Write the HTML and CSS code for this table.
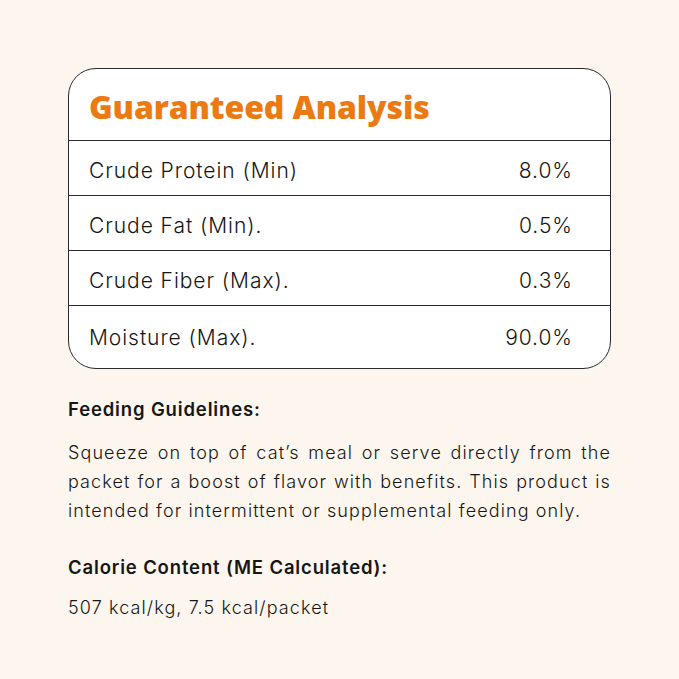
FILE: index.html
```html
<!DOCTYPE html>
<html>
<head>
<meta charset="utf-8">
<link rel="stylesheet" href="styles.css">
</head>
<body>
<div class="page">
  <div class="card">
    <div class="card-head"><h1 class="title">Guaranteed Analysis</h1></div>
    <div class="row"><span>Crude Protein (Min)</span><span class="val">8.0%</span></div>
    <div class="row"><span>Crude Fat (Min).</span><span class="val">0.5%</span></div>
    <div class="row"><span>Crude Fiber (Max).</span><span class="val">0.3%</span></div>
    <div class="row"><span>Moisture (Max).</span><span class="val">90.0%</span></div>
  </div>
  <div class="info">
    <h2 class="label">Feeding Guidelines:</h2>
    <p class="text">Squeeze on top of cat’s meal or serve directly from the packet for a boost of flavor with benefits. This product is intended for intermittent or supplemental feeding only.</p>
    <h2 class="label second">Calorie Content (ME Calculated):</h2>
    <p class="text short">507 kcal/kg, 7.5 kcal/packet</p>
  </div>
</div>
</body>
</html>
```

FILE: styles.css
```css
* { box-sizing: border-box; }
html, body { margin: 0; padding: 0; }
body {
  background: #fdf6ee;
  width: 679px;
  height: 679px;
  font-family: "Inter", "Noto Sans", sans-serif;
  color: #161616;
}
.page {
  padding: 68px 68px 0 68px;
}
.card {
  background: #ffffff;
  border: 1.5px solid #2a2a2a;
  border-radius: 28px;
  width: 543px;
  overflow: hidden;
}
.card-head {
  height: 72px;
  border-bottom: 1.5px solid #2a2a2a;
  display: flex;
  align-items: center;
  padding: 4px 0 0 20px;
}
.title {
  margin: 0;
  font-family: "Open Sans", sans-serif;
  font-weight: 800;
  font-size: 32px;
  color: #ec7a12;
  letter-spacing: -0.1px;
  white-space: nowrap;
}
.row {
  height: 55px;
  display: flex;
  align-items: center;
  justify-content: space-between;
  padding: 4px 37px 0 20px;
  font-size: 21px;
  font-weight: 350;
  letter-spacing: 0.95px;
  border-bottom: 1.5px solid #2a2a2a;
}
.row:last-child { border-bottom: none; height: 62px; padding-bottom: 4px; }
.val { text-align: right; }
.info {
  padding-top: 29px;
}
.label {
  margin: 0;
  font-size: 18.5px;
  font-weight: 600;
  letter-spacing: 0.85px;
}
.second { margin-top: 31px; }
.text {
  margin: 18px 0 0 0;
  font-size: 18px;
  font-weight: 350;
  line-height: 29px;
  letter-spacing: 1.1px;
  text-align: justify;
}
.short { margin-top: 15px; }
```
